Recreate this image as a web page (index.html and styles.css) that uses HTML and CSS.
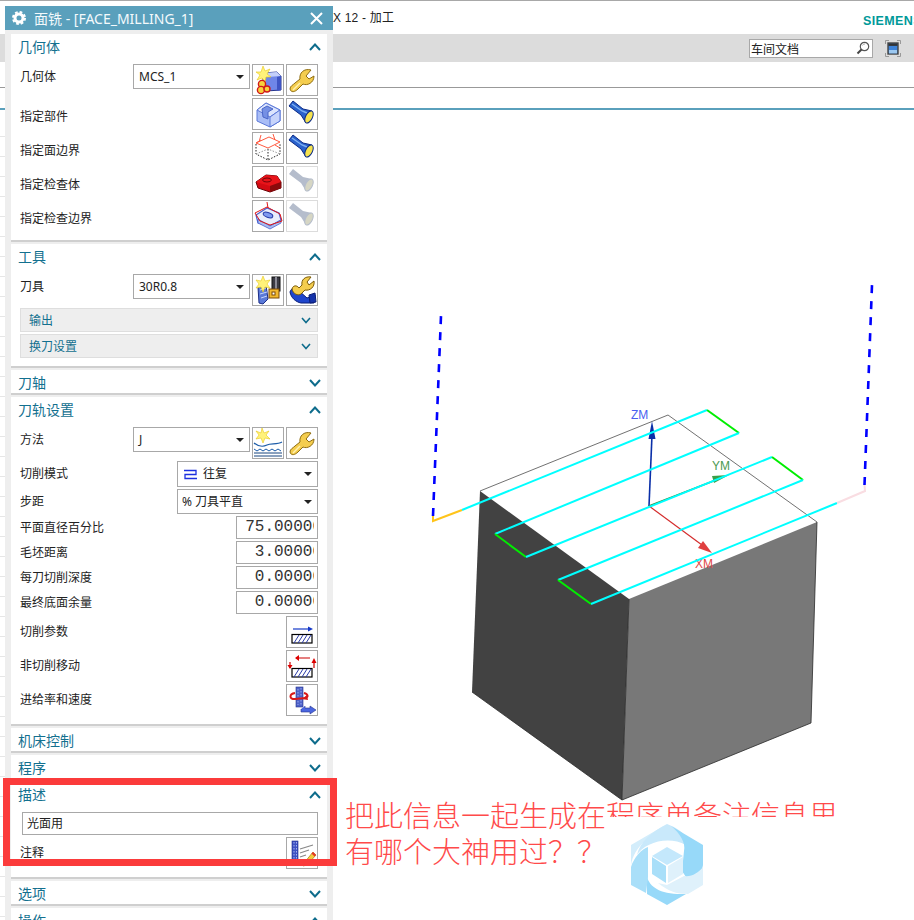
FILE: index.html
```html
<!DOCTYPE html>
<html lang="zh-CN">
<head>
<meta charset="utf-8">
<title>面铣 - [FACE_MILLING_1]</title>
<link rel="stylesheet" href="styles.css">
</head>
<body>
<svg class="sprite" aria-hidden="true">
  <symbol id="i-geom-new" viewBox="0 0 30 30">
    <path d="M10 8 L24 7 L28 11 L28 25 L13 26 L10 22Z" fill="#6f86e8" stroke="#25348c"/>
    <path d="M10 8 L24 7 L28 11 L14 12Z" fill="#c4d0fa"/>
    <path d="M24 12 L28 11 L28 25 L24 26Z" fill="#3f55c4"/>
    <path d="M10 1 L12 6 L17 4 L14 9 L18 12 L13 12 L12 17 L9 13 L4 15 L7 10 L3 7 L8 7Z" fill="#fff27a" stroke="#e8c818" stroke-width=".6"/>
    <circle cx="9" cy="19" r="3.6" fill="#f7d23c" stroke="#d01818" stroke-width="1.4"/>
    <circle cx="8" cy="25" r="3.6" fill="#f7d23c" stroke="#d01818" stroke-width="1.4"/>
    <circle cx="14" cy="24" r="3" fill="#f7d23c" stroke="#d01818" stroke-width="1.4"/>
  </symbol>
  <symbol id="i-wrench" viewBox="0 0 30 30">
    <path d="M3 24 C4 28 8 27 11 24 L16 19 C20 21 27 18 27 11 L22 14 L19 11 L24 5 C17 3 12 8 13 14 L8 18 C6 20 3 21 3 24Z" fill="#f4cd4e" stroke="#8f6d12"/>
    <path d="M6 25 L13 18" stroke="#fff2b0" stroke-width="1.4" fill="none"/>
  </symbol>
  <symbol id="i-part" viewBox="0 0 30 30">
    <path d="M4 11 L13 4 L27 11 L27 22 L17 28 L4 22Z" fill="#a9bdf6" stroke="#5b78d8"/>
    <path d="M4 11 L13 4 L27 11 L17 18Z" fill="#dce5fd" stroke="#5b78d8"/>
    <path d="M9 10 L14 7 L20 10 L15 13 L15 20 L10 18Z" fill="#7590e4" stroke="#4a66c8"/>
    <path d="M17 18 L17 28 L27 22 L27 11Z" fill="#c7d4fb" stroke="#5b78d8"/>
  </symbol>
  <symbol id="i-lamp" viewBox="0 0 30 30">
    <path d="M2 7 L6 2 L16 10 L25 12 L19 24 L14 16Z" fill="#2a62cc" stroke="#0b2a86"/>
    <path d="M5 5 L15 12 L20 14" stroke="#7fb0f2" stroke-width="1.4" fill="none"/>
    <ellipse cx="22" cy="18" rx="3.4" ry="6.6" transform="rotate(27 22 18)" fill="#f5e24e" stroke="#0b2a86"/>
  </symbol>
  <symbol id="i-lamp-off" viewBox="0 0 30 30">
    <path d="M2 7 L6 2 L16 10 L25 12 L19 24 L14 16Z" fill="#b5bdcc"/>
    <ellipse cx="22" cy="18" rx="3.4" ry="6.6" transform="rotate(27 22 18)" fill="#d6d6c4" stroke="#b5bdcc"/>
  </symbol>
  <symbol id="i-boundary" viewBox="0 0 30 30">
    <g fill="none" stroke="#ff5a40">
      <path d="M3 10 L15 15 L27 9 L16 4Z"/>
      <path d="M8 2 L6 9 M20 1 L22 7 M3 10 L8 7 M22 12 L27 15"/>
    </g>
    <g fill="none" stroke="#222" stroke-dasharray="1.5 1.5">
      <path d="M3 11 L3 21 L15 27 L27 21 L27 10 M15 16 L15 27"/>
      <path d="M3 21 L15 16 L27 21" stroke="#999"/>
    </g>
  </symbol>
  <symbol id="i-check" viewBox="0 0 30 30">
    <path d="M3 15 L13 8 L24 9 L28 15 L28 21 L17 25 L5 21Z" fill="#d40a12" stroke="#6a0408"/>
    <path d="M3 15 L13 8 L24 9 L28 15 L17 19Z" fill="#e8141a"/>
    <ellipse cx="14" cy="13" rx="4.4" ry="2" fill="none" stroke="#700408"/>
    <path d="M17 19 L28 15 L28 21 L17 25Z" fill="#8a0a0c"/>
  </symbol>
  <symbol id="i-check-bd" viewBox="0 0 30 30">
    <path d="M3 14 L14 7 L26 12 L28 19 L17 25 L5 22Z" fill="#e9eefc" stroke="#4a62d0" stroke-width="1.2"/>
    <path d="M5 18 L17 25 L28 19 L28 22 L17 28 L5 22Z" fill="#a9bdf0" stroke="#4a62d0" stroke-width=".8"/>
    <path d="M2 12 L14 6 L27 13 L29 20 M14 1 L15 7 M2 12 L7 20 L17 24 L29 20" fill="none" stroke="#e01818"/>
    <ellipse cx="15" cy="14" rx="5" ry="2.4" transform="rotate(20 15 14)" fill="#7f9af0" stroke="#2438a8"/>
  </symbol>
  <symbol id="i-tool-new" viewBox="0 0 30 30">
    <path d="M5 12 L13 10 L15 24 L10 29 L6 28Z" fill="#5b7ad8" stroke="#1c2e88"/>
    <path d="M7 15 L13 13 M7 19 L14 17 M8 23 L14 21" stroke="#c7d4fb" fill="none"/>
    <rect x="19" y="2" width="8" height="14" fill="#3a3a44" stroke="#111"/>
    <rect x="22" y="2" width="2" height="14" fill="#8a8a96"/>
    <rect x="16" y="14" width="10" height="9" fill="#f2b92e" stroke="#7a4a08"/>
    <rect x="19" y="17" width="3" height="3" fill="#fff" stroke="#7a4a08"/>
    <path d="M10 1 L12 6 L17 5 L14 9 L17 13 L12 12 L10 17 L8 12 L3 13 L6 9 L3 5 L8 6Z" fill="#fff27a" stroke="#e8c818" stroke-width=".6"/>
  </symbol>
  <symbol id="i-tool-edit" viewBox="0 0 30 30">
    <path d="M3 17 C4 13 8 12 11 15 L20 23 L28 20 L27 28 L14 28 C9 27 4 23 3 17Z" fill="#1f46cc" stroke="#0b1e78"/>
    <path d="M22 20 L28 18 L29 27 L23 28Z" fill="#1533aa" stroke="#0b1e78"/>
    <path d="M5 14 C6 10 10 10 12 13 L15 10 C14 5 18 1 24 2 L20 7 L22 10 L27 6 C28 12 23 16 18 15 L14 19 C11 21 6 19 5 14Z" fill="#f4cd4e" stroke="#7a5a08"/>
  </symbol>
  <symbol id="i-method" viewBox="0 0 30 30">
    <path d="M1 14 L11 18 L21 14 L29 17 L29 28 L1 28Z" fill="#fff"/>
    <path d="M1 15 C6 19 10 19 14 17 C18 15 24 17 29 14" fill="none" stroke="#1c5ca8" stroke-width="1.2"/>
    <path d="M1 21 l3 2 l3 -2 l3 2 l3 -2 l3 2 l3 -2 l3 2 l3 -2 l3 2" fill="none" stroke="#1c5ca8"/>
    <path d="M1 25 L29 25 M1 28 L29 28" stroke="#16447e"/>
    <path d="M9 0 L11 5 L16 3 L13 7 L17 11 L12 10 L10 15 L8 10 L3 11 L6 7 L3 3 L8 5Z" fill="#fff27a" stroke="#e8c818" stroke-width=".6"/>
  </symbol>
  <symbol id="i-cutparam" viewBox="0 0 30 30">
    <path d="M6 12 L24 12" stroke="#1438c8" stroke-width="1.2"/>
    <path d="M21 9.5 L26 12 L21 14.5Z" fill="#1438c8"/>
    <rect x="5" y="17.5" width="20" height="8.5" fill="#fff" stroke="#000" stroke-width="1.2"/>
    <path d="M7 26 L12 18 M11 26 L16 18 M15 26 L20 18 M19 26 L24 18" stroke="#2a3aa8"/>
  </symbol>
  <symbol id="i-noncut" viewBox="0 0 30 30">
    <path d="M9 7 L23 7 M3 11 L3 17 M27 9 L27 17" stroke="#c00" stroke-width="1.2" fill="none"/>
    <path d="M12 4 L8 7 L12 10Z M0.5 14 L5.5 14 L3 18Z M24.5 12 L29.5 12 L27 7Z" fill="#d00"/>
    <rect x="5" y="17.5" width="20" height="8.5" fill="#fff" stroke="#000" stroke-width="1.2"/>
    <path d="M7 26 L12 18 M11 26 L16 18 M15 26 L20 18 M19 26 L24 18" stroke="#2a3aa8"/>
  </symbol>
  <symbol id="i-feed" viewBox="0 0 30 30">
    <rect x="9" y="2" width="7" height="20" fill="#4e62c8" stroke="#26348c" stroke-width=".6"/>
    <path d="M11 4 L11 20 M14 3 L14 21" stroke="#9aa8ee" stroke-dasharray="1.5 1.5"/>
    <path d="M8 8 C2 9 2 14 8 14 L18 13 C22 12 21 9 17 8" fill="none" stroke="#d81818" stroke-width="2"/>
    <path d="M15 14 L20 10 L21 15Z" fill="#d81818"/>
    <path d="M14 24 L14 27 L23 27 L23 29 L29 25 L23 21 L23 23 L18 23 L18 21" fill="#4a66e0" stroke="#26348c" stroke-width=".6"/>
  </symbol>
  <symbol id="i-note" viewBox="0 0 30 30">
    <rect x="5" y="3" width="6" height="22" fill="#3e52c4" stroke="#1c2a88" stroke-width=".6"/>
    <path d="M7 4 L7 24 M9.5 4 L9.5 24" stroke="#a6b2ee" stroke-dasharray="1.5 1.5"/>
    <path d="M13 11 L26 7 M13 15 L22 12 M13 19 L19 17" stroke="#888" stroke-width="1.2"/>
    <path d="M17 25 L26 14 L29 17 L20 27 L16 28Z" fill="#f4cd3e" stroke="#a87a10" stroke-width=".7"/>
    <path d="M26 14 L29 17 L27.5 18.6 L24.5 15.6Z" fill="#e8352a"/>
  </symbol>
</svg>

<div class="app">
  <div class="topline"></div>
  <header class="titlebar">
    <span class="app-title">X 12 - 加工</span>
    <span class="brand">SIEMENS</span>
  </header>
  <div class="toolbar">
    <div class="search">
      <span class="search-text">车间文档</span>
      <svg class="search-icon" width="14" height="14" viewBox="0 0 14 14">
        <circle cx="8.5" cy="5.5" r="4.2" fill="#fff" stroke="#555" stroke-width="1.2"/>
        <path d="M5.5 8.5 L1.5 12.5" stroke="#444" stroke-width="2"/>
        <path d="M6.5 4.5 A2.5 2.5 0 0 1 9 3" fill="none" stroke="#aaa"/>
      </svg>
    </div>
    <svg class="fit-icon" width="16" height="17" viewBox="0 0 16 17">
      <path d="M0.5 4 V0.5 H4 M12 0.5 H15.5 V4 M0.5 13 V16.5 H4 M12 16.5 H15.5 V13" fill="none" stroke="#999"/>
      <rect x="3" y="3" width="10" height="11" fill="#3c82d8" stroke="#444" stroke-width="1.4"/>
      <rect x="3.5" y="3.5" width="9" height="2.4" fill="#333"/>
      <rect x="4" y="10" width="8" height="3.4" fill="#9cc8f0"/>
    </svg>
  </div>
  <div class="ribbon"></div>
  <div class="subbar"></div>
  <main class="viewport">
    <div class="tree-strip"></div>
    <svg class="scene" viewBox="5 111 909 809" width="909" height="809">
      <polygon points="480,492 629,600 622,801 472,693" fill="#424242"/>
      <polygon points="629,600 817,523 811,724 622,801" fill="#787878"/>
      <path d="M472 693 L622 801 L811 724 L817 523 M622 801 L629 600" fill="none" stroke="#2a2a2a" stroke-width=".8"/>
      <path d="M480 492 L668 416 L817 523" fill="none" stroke="#333" stroke-width=".7"/>

      <path d="M649 507 L652 436" stroke="#0a2fa8" stroke-width="1.6"/>
      <path d="M652 422 L655.5 440 L648.5 440Z" fill="#0a2fa8"/>
      <path d="M649 507 L716 481" stroke="#2f8a3a" stroke-width="1.6"/>
      <path d="M729 476 L714 484 L712 477Z" fill="#3aa048"/>
      <path d="M649 507 L702 546" stroke="#d42c2c" stroke-width="1.2"/>
      <path d="M712 554 L698 549 L703 542Z" fill="#e04040"/>
      <text class="axis axis-z" x="631" y="420">ZM</text>
      <text class="axis axis-y" x="712" y="471">YM</text>
      <text class="axis axis-x" x="695" y="569">XM</text>

      <g fill="none" stroke-width="2">
        <path d="M433 517 L433 522 L462 511" stroke="#ffc41a"/>
        <path d="M462 511 L707 411" stroke="#00ffff"/>
        <path d="M707 411 L739 434" stroke="#00ee00"/>
        <path d="M739 434 L495 535" stroke="#00ffff"/>
        <path d="M495 535 L526 558" stroke="#00ee00"/>
        <path d="M526 558 L772 458" stroke="#00ffff"/>
        <path d="M772 458 L803 481" stroke="#00ee00"/>
        <path d="M803 481 L558 581" stroke="#00ffff"/>
        <path d="M558 581 L591 605" stroke="#00ee00"/>
        <path d="M591 605 L837 504" stroke="#00ffff"/>
        <path d="M837 504 L865 492 L864.500 486" stroke="#f9dde2"/>
        <path d="M433 517 L441 317" stroke="#0000ff" stroke-width="2.600" stroke-dasharray="8 8"/>
        <path d="M864.500 486 L872 286" stroke="#0000ff" stroke-width="2.600" stroke-dasharray="8 8"/>
      </g>

      <g class="watermark">
        <path d="M667 825 L631 846 L631 866 C634 848 650 836 667 825Z" fill="#d3edfb"/>
        <path d="M667 825 C652 833 640 842 637 856 C644 844 668 836 686 846 C690 838 680 830 667 825Z" fill="#c9e9fb"/>
        <path d="M671 827 L703 846 L703 866 C702 874 696 880 690 884 L682 872 L684 852 C686 844 680 834 671 827Z" fill="#97d9f9"/>
        <path d="M703 868 L703 886 L688 895 C676 895 668 892 658 884 L667 886 L684 877 C692 878 698 874 703 868Z" fill="#dff1fb"/>
        <path d="M647 878 C650 888 660 896 686 895 L667 906 L647 895Z" fill="#97d9f9"/>
        <path d="M631 868 C634 858 642 850 648 848 L648 878 L646 894 L631 886Z" fill="#a9dff9"/>
        <path d="M667 848 L683 857 L667 866 L652 857Z" fill="#c4e8fc"/>
        <path d="M652 858 L666 867 L666 884 L652 875Z" fill="#a9dff9"/>
        <path d="M668 867 L683 858 L683 875 L668 884Z" fill="#dff1fb"/>
      </g>
    </svg>
  </main>

  <section class="dialog">
    <div class="dialog-title">
      <svg class="gear" width="14" height="14" viewBox="0 0 14 14">
        <circle cx="7" cy="7" r="4" fill="none" stroke="#fff" stroke-width="3"/>
        <circle cx="7" cy="7" r="6" fill="none" stroke="#fff" stroke-width="2" stroke-dasharray="2.700 2"/>
      </svg>
      <span class="dialog-name">面铣 - [FACE_MILLING_1]</span>
      <svg class="close" width="13" height="13" viewBox="0 0 13 13"><path d="M1 1 L12 12 M12 1 L1 12" stroke="#fff" stroke-width="2"/></svg>
    </div>
    <div class="dialog-body">

      <div class="group">
        <div class="group-head"><span>几何体</span><svg class="chev" width="12" height="8" viewBox="0 0 12 8"><path d="M1 7 L6 1.500 L11 7"/></svg></div>
        <div class="group-body">
          <div class="row">
            <span class="label label-select">几何体</span>
            <div class="select select-short"><span>MCS_1</span><i class="caret"></i></div>
            <button class="tool"><svg><use href="#i-geom-new"/></svg></button>
            <button class="tool"><svg><use href="#i-wrench"/></svg></button>
          </div>
          <div class="row">
            <span class="label label-low">指定部件</span>
            <button class="tool"><svg><use href="#i-part"/></svg></button>
            <button class="tool"><svg><use href="#i-lamp"/></svg></button>
          </div>
          <div class="row">
            <span class="label label-low">指定面边界</span>
            <button class="tool"><svg><use href="#i-boundary"/></svg></button>
            <button class="tool"><svg><use href="#i-lamp"/></svg></button>
          </div>
          <div class="row">
            <span class="label label-low">指定检查体</span>
            <button class="tool"><svg><use href="#i-check"/></svg></button>
            <button class="tool tool-off"><svg><use href="#i-lamp-off"/></svg></button>
          </div>
          <div class="row">
            <span class="label label-low">指定检查边界</span>
            <button class="tool"><svg><use href="#i-check-bd"/></svg></button>
            <button class="tool tool-off"><svg><use href="#i-lamp-off"/></svg></button>
          </div>
        </div>
      </div>

      <div class="group">
        <div class="group-head"><span>工具</span><svg class="chev" width="12" height="8" viewBox="0 0 12 8"><path d="M1 7 L6 1.500 L11 7"/></svg></div>
        <div class="group-body">
          <div class="row">
            <span class="label label-select">刀具</span>
            <div class="select select-short"><span>30R0.8</span><i class="caret"></i></div>
            <button class="tool"><svg><use href="#i-tool-new"/></svg></button>
            <button class="tool"><svg><use href="#i-tool-edit"/></svg></button>
          </div>
          <div class="fold"><span>输出</span><svg class="chev chev-small" width="10" height="7" viewBox="0 0 10 7"><path d="M1 1 L5 5.500 L9 1"/></svg></div>
          <div class="fold"><span>换刀设置</span><svg class="chev chev-small" width="10" height="7" viewBox="0 0 10 7"><path d="M1 1 L5 5.500 L9 1"/></svg></div>
        </div>
      </div>

      <div class="group">
        <div class="group-head"><span>刀轴</span><svg class="chev" width="12" height="8" viewBox="0 0 12 8"><path d="M1 1 L6 6.500 L11 1"/></svg></div>
      </div>

      <div class="group">
        <div class="group-head"><span>刀轨设置</span><svg class="chev" width="12" height="8" viewBox="0 0 12 8"><path d="M1 7 L6 1.500 L11 7"/></svg></div>
        <div class="group-body">
          <div class="row">
            <span class="label label-select">方法</span>
            <div class="select select-short"><span>J</span><i class="caret"></i></div>
            <button class="tool"><svg><use href="#i-method"/></svg></button>
            <button class="tool"><svg><use href="#i-wrench"/></svg></button>
          </div>
          <div class="row row-select-a">
            <span class="label label-fill">切削模式</span>
            <div class="select select-wide">
              <svg class="zigzag" width="13" height="11" viewBox="0 0 13 11"><path d="M0 1.500 H12 V5.500 H1 V9.500 H13" fill="none" stroke="#1c30e0" stroke-width="1.300"/></svg>
              <span>往复</span><i class="caret"></i>
            </div>
          </div>
          <div class="row row-select-b">
            <span class="label label-fill">步距</span>
            <div class="select select-wide"><span>% 刀具平直</span><i class="caret"></i></div>
          </div>
          <div class="row row-num"><span class="label label-fill">平面直径百分比</span><div class="num"><div class="num-clip"><span>75.00000</span></div></div></div>
          <div class="row row-num"><span class="label label-fill">毛坯距离</span><div class="num"><div class="num-clip"><span>3.00000</span></div></div></div>
          <div class="row row-num"><span class="label label-fill">每刀切削深度</span><div class="num"><div class="num-clip"><span>0.00000</span></div></div></div>
          <div class="row row-num"><span class="label label-fill">最终底面余量</span><div class="num"><div class="num-clip"><span>0.00000</span></div></div></div>
          <div class="row"><span class="label">切削参数</span><button class="tool"><svg><use href="#i-cutparam"/></svg></button></div>
          <div class="row"><span class="label">非切削移动</span><button class="tool"><svg><use href="#i-noncut"/></svg></button></div>
          <div class="row"><span class="label">进给率和速度</span><button class="tool"><svg><use href="#i-feed"/></svg></button></div>
        </div>
      </div>

      <div class="group">
        <div class="group-head"><span>机床控制</span><svg class="chev" width="12" height="8" viewBox="0 0 12 8"><path d="M1 1 L6 6.500 L11 1"/></svg></div>
      </div>
      <div class="group">
        <div class="group-head"><span>程序</span><svg class="chev" width="12" height="8" viewBox="0 0 12 8"><path d="M1 1 L6 6.500 L11 1"/></svg></div>
      </div>

      <div class="group">
        <div class="group-head"><span>描述</span><svg class="chev" width="12" height="8" viewBox="0 0 12 8"><path d="M1 7 L6 1.500 L11 7"/></svg></div>
        <div class="group-body">
          <div class="field">光面用</div>
          <div class="row"><span class="label">注释</span><button class="tool"><svg><use href="#i-note"/></svg></button></div>
        </div>
      </div>

      <div class="group">
        <div class="group-head"><span>选项</span><svg class="chev" width="12" height="8" viewBox="0 0 12 8"><path d="M1 1 L6 6.500 L11 1"/></svg></div>
      </div>
      <div class="group">
        <div class="group-head"><span>操作</span><svg class="chev" width="12" height="8" viewBox="0 0 12 8"><path d="M1 7 L6 1.500 L11 7"/></svg></div>
      </div>
    </div>
  </section>

  <div class="red-frame"></div>
  <div class="annotation">
    <div class="note-line">把此信息一起生成在<span class="note-cut">程序单备注信息里</span></div>
    <div class="note-line">有哪个大神用过？？</div>
  </div>
</div>
</body>
</html>
```
FILE: styles.css
```css
* { box-sizing: border-box; }
html, body { margin: 0; padding: 0; background: #fff; }
body { font-family: "Noto Sans", "Noto Sans CJK SC", sans-serif; }
.sprite { position: absolute; width: 0; height: 0; }

.app {
  position: relative;
  width: 914px;
  height: 920px;
  overflow: hidden;
  display: flex;
  flex-direction: column;
  background: #fff;
}
.topline { height: 1px; background: #a8a8a8; flex: none; }
.titlebar {
  height: 33px;
  flex: none;
  display: flex;
  align-items: center;
  justify-content: space-between;
  padding: 0 0 3px 333px;
  overflow: hidden;
}
.app-title { font: 12px "Liberation Sans", "Noto Sans CJK SC", sans-serif; color: #222; letter-spacing: .2px; }
.brand {
  font: 700 12.500px "Liberation Sans", sans-serif;
  color: #009999;
  letter-spacing: .4px;
  margin-right: -8px;
  padding-top: 9px;
  white-space: nowrap;
}
.toolbar {
  height: 28px;
  flex: none;
  background: #dcdcdc;
  display: flex;
  align-items: center;
  justify-content: flex-end;
  gap: 12px;
  padding-right: 13px;
}
.search {
  width: 124px;
  height: 19px;
  background: #fff;
  border: 1px solid #a8a8a8;
  display: flex;
  align-items: center;
  justify-content: space-between;
  padding: 0 2px 0 1px;
}
.search-text { font: 12px "Noto Sans CJK SC", sans-serif; color: #222; }
.ribbon { height: 26px; flex: none; border-bottom: 1px solid #999; }
.subbar { height: 22px; flex: none; border-bottom: 2px solid #5aa0bc; }
.viewport { flex: 1; display: flex; min-height: 0; }
.tree-strip {
  width: 5px;
  flex: none;
  background: repeating-linear-gradient(to bottom, #fff 0, #fff 19px, #e6e6e6 19px, #e6e6e6 20px);
  background-position: 0 7px;
}
.scene { display: block; flex: none; }
.axis { font: 12px "Liberation Sans", sans-serif; }
.axis-z { fill: #4a5ff0; }
.axis-y { fill: #4a9a50; }
.axis-x { fill: #e04848; }

.dialog {
  position: absolute;
  left: 5px;
  top: 6px;
  width: 328px;
  height: 914px;
  overflow: hidden;
  background: #eeeeee;
}
.dialog-title {
  height: 24px;
  background: #5aa0bc;
  display: flex;
  align-items: center;
  padding: 0 10px 0 7px;
  color: #fff;
}
.dialog-name {
  flex: 1;
  margin-left: 8px;
  font-size: 14px;
  white-space: nowrap;
  color: #f4fafc;
}
.dialog-body {
  display: flex;
  flex-direction: column;
  gap: 2px;
  padding: 4px 6px 0;
}
.group { background: #fff; border-bottom: 2px solid #cfcfcf; }
.group-head {
  height: 23px;
  display: flex;
  justify-content: space-between;
  align-items: center;
  padding: 3px 6px 0 7px;
  font-size: 14px;
  color: #13708f;
  line-height: 20px;
}
.chev { fill: none; stroke: #0e6c8c; stroke-width: 2; }
.chev-small { stroke-width: 1.600; }
.group-body {
  display: flex;
  flex-direction: column;
  gap: 2px;
  padding: 7px 9px 8px;
}
.row { display: flex; align-items: flex-start; gap: 2px; }
.label { flex: 1; font-size: 12px; color: #222; line-height: 32px; white-space: nowrap; }
.label-select { line-height: 25px; }
.label-low { position: relative; top: 3px; }
.label-fill { line-height: inherit; }
.row-select-a { height: 26px; line-height: 26px; }
.row-select-b { height: 25px; line-height: 25px; }
.row-num { height: 23px; line-height: 23px; }
.tool {
  width: 32px;
  height: 32px;
  padding: 0;
  margin: 0;
  flex: none;
  background: #fff;
  border: 1px solid #a8a8a8;
}
.tool svg { display: block; width: 30px; height: 30px; }
.tool-off { border-color: #dcdcdc; }
.select {
  height: 100%;
  display: flex;
  align-items: center;
  border: 1px solid #a8a8a8;
  background: #fff;
  font-size: 12px;
  color: #222;
  flex: none;
  white-space: nowrap;
}
.select-short { width: 117px; height: 25px; padding: 0 5px; }
.select-wide { width: 141px; padding: 0 5px 0 4px; }
.zigzag { margin: 0 6px 0 2px; }
.caret {
  margin-left: auto;
  width: 0;
  height: 0;
  border-left: 4px solid transparent;
  border-right: 4px solid transparent;
  border-top: 4px solid #222;
}
.fold {
  height: 24px;
  background: #eeeeee;
  border: 1px solid #dedede;
  display: flex;
  align-items: center;
  justify-content: space-between;
  padding: 0 6px 0 8px;
  font-size: 12px;
  color: #13708f;
}
.num {
  width: 82px;
  height: 23px;
  flex: none;
  border: 1px solid #a8a8a8;
  background: #fff;
  padding-right: 3px;
}
.num-clip {
  height: 21px;
  display: flex;
  justify-content: flex-end;
  overflow: hidden;
  font: 16px/21px "Liberation Mono", monospace;
  color: #333;
}
.num-clip span { flex: none; margin-right: -8px; }
.field {
  margin-left: 2px;
  height: 23px;
  line-height: 21px;
  border: 1px solid #a8a8a8;
  padding: 0 4px;
  font-size: 12px;
  color: #222;
}
.red-frame {
  position: absolute;
  left: 3px;
  top: 778px;
  width: 334px;
  height: 88px;
  border: 7px solid #fb3b3b;
}
.annotation {
  position: absolute;
  left: 345px;
  top: 796px;
  font: 300 29px/36px "Noto Sans CJK SC", sans-serif;
  color: #ff4a4a;
  white-space: nowrap;
}
.note-line { height: 36px; }
.note-cut { display: inline-block; height: 21px; overflow: hidden; vertical-align: top; }
```
